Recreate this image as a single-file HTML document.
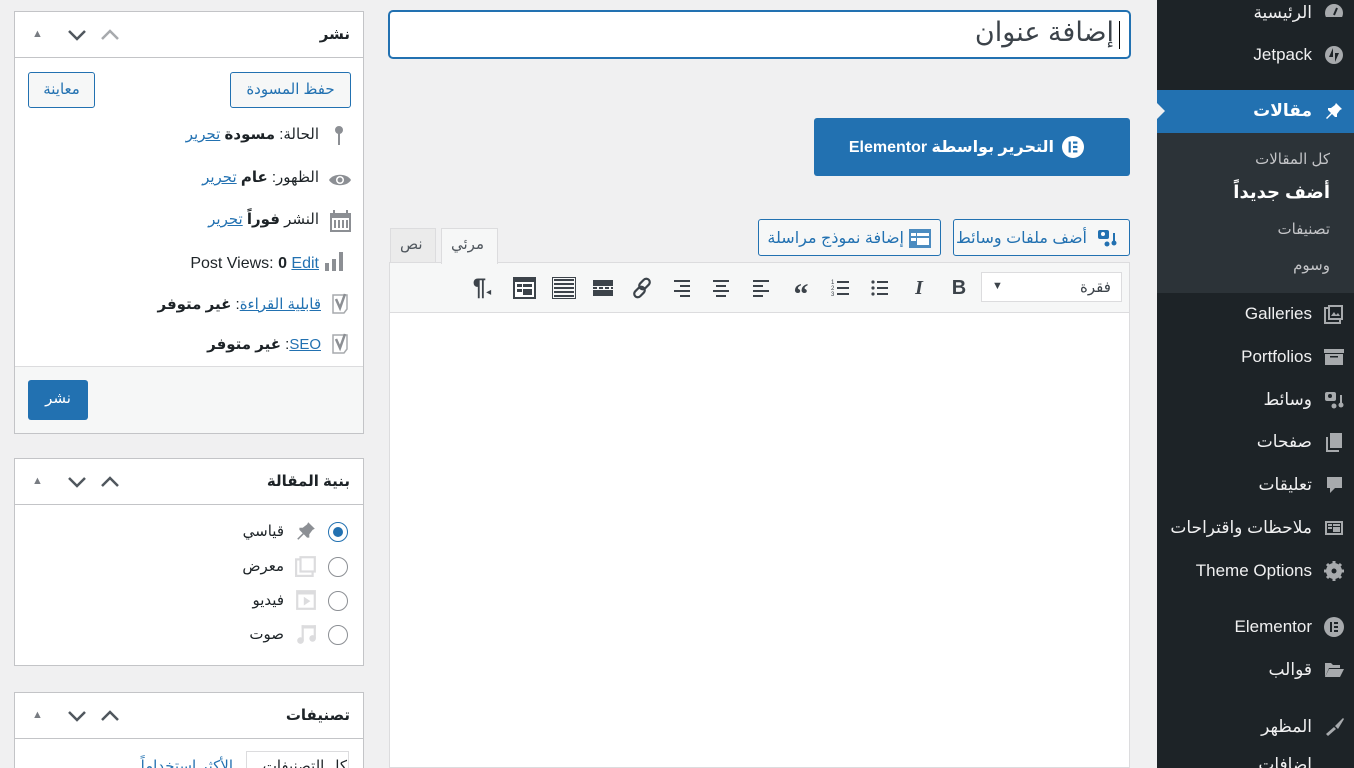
<!DOCTYPE html>
<html dir="ltr" style="height:768px;overflow:hidden"><head><meta charset="utf-8"><style>
*{box-sizing:border-box;margin:0;padding:0}
body{width:1354px;height:768px;overflow:hidden;background:#f0f0f1;font-family:"Liberation Sans","DejaVu Sans",sans-serif;color:#1d2327;position:relative;font-size:15px}
.a{position:absolute}
#side{left:1157px;top:0;width:197px;height:768px;background:#1d2327}
.mi{position:absolute;right:42px;color:#f0f0f1;font-size:17px;line-height:20px;white-space:nowrap;direction:rtl}
.ic{position:absolute;left:167px;width:20px;height:20px}
.sub{position:absolute;right:24px;color:#c3c4c7;font-size:15px;direction:rtl;line-height:20px}
.box{position:absolute;left:14px;width:350px;background:#fff;border:1px solid #c3c4c7}
.bh{height:46px;border-bottom:1px solid #c3c4c7;position:relative}
.bh .t{position:absolute;right:13px;top:13px;font-weight:bold;font-size:15px;direction:rtl}
.arr{position:absolute;top:14px;font-size:14px;color:#787c82}
.btn{position:absolute;border:1px solid #2271b1;color:#2271b1;border-radius:3px;background:#f6f7f7;font-size:15px;text-align:center;direction:rtl}
.row{position:absolute;right:14px;font-size:15px;direction:rtl;white-space:nowrap;line-height:20px}
.row a{color:#2271b1;text-decoration:underline}
.rad{position:absolute;left:313px;width:20px;height:20px;border:1px solid #8c8f94;border-radius:50%;background:#fff}
.tb{position:absolute;top:276px;width:24px;height:24px;color:#3c434a;font-size:20px;text-align:center;line-height:24px}
</style></head><body>

<div id="side" class="a">
 <div class="a" style="left:0;top:90px;width:197px;height:43px;background:#2271b1"></div>
 <div class="a" style="left:0;top:103px;width:0;height:0;border-top:8px solid transparent;border-bottom:8px solid transparent;border-left:8px solid #f0f0f1"></div>
 <div class="a" style="left:0;top:133px;width:197px;height:160px;background:#2c3338"></div>

 <svg class="ic" style="top:3px" viewBox="0 0 20 20"><circle cx="10" cy="10" r="9" fill="#a7aaad"/><rect x="0" y="14" width="20" height="6" fill="#1d2327"/><path d="M10 12 L13 5" stroke="#1d2327" stroke-width="2"/></svg>
 <div class="mi" style="top:3px">الرئيسية</div>
 <svg class="ic" style="top:45px" viewBox="0 0 20 20"><circle cx="10" cy="10" r="9" fill="#a7aaad"/><path d="M9 3v9H5z M11 17V8h4z" fill="#1d2327"/></svg>
 <div class="mi" style="top:45px">Jetpack</div>
 <svg class="ic" style="top:101px" viewBox="0 0 20 20"><path d="M12 2l6 6-2 1-3 4 0 3-2 0-3-3-5 5-1-1 5-5-3-3 0-2 3 0 4-3z" fill="#fff"/></svg>
 <div class="mi" style="top:101px;font-weight:bold;color:#fff">مقالات</div>
 <div class="sub" style="top:150px">كل المقالات</div>
 <div class="sub" style="top:182px;color:#fff;font-weight:bold;font-size:18px">أضف جديداً</div>
 <div class="sub" style="top:220px">تصنيفات</div>
 <div class="sub" style="top:256px">وسوم</div>

 <svg class="ic" style="top:304px" viewBox="0 0 20 20"><rect x="4" y="1" width="15" height="15" fill="#a7aaad"/><rect x="1" y="4" width="15" height="15" fill="none" stroke="#a7aaad" stroke-width="2"/><rect x="6" y="3" width="11" height="11" fill="#1d2327"/><path d="M7 12l3-4 2 3 2-2 2 3z" fill="#a7aaad"/></svg>
 <div class="mi" style="top:304px">Galleries</div>
 <svg class="ic" style="top:347px" viewBox="0 0 20 20"><rect x="0" y="2" width="20" height="4" fill="#a7aaad"/><rect x="1" y="7" width="18" height="11" fill="#a7aaad"/><rect x="6" y="9" width="8" height="1.5" fill="#1d2327"/></svg>
 <div class="mi" style="top:347px">Portfolios</div>
 <svg class="ic" style="top:390px" viewBox="0 0 20 20"><rect x="1" y="2" width="11" height="9" rx="2" fill="#a7aaad"/><circle cx="6" cy="6" r="2" fill="#1d2327"/><circle cx="10" cy="16" r="2.5" fill="#a7aaad"/><circle cx="17" cy="15" r="2.5" fill="#a7aaad"/><rect x="16" y="5" width="2" height="10" fill="#a7aaad"/></svg>
 <div class="mi" style="top:390px">وسائط</div>
 <svg class="ic" style="top:432px" viewBox="0 0 20 20"><rect x="6" y="1" width="12" height="15" fill="#a7aaad"/><path d="M3 5v14h12" fill="none" stroke="#a7aaad" stroke-width="2"/></svg>
 <div class="mi" style="top:432px">صفحات</div>
 <svg class="ic" style="top:475px" viewBox="0 0 20 20"><path d="M3 2h15v11h-7l-5 5v-5H3z" fill="#a7aaad"/></svg>
 <div class="mi" style="top:475px">تعليقات</div>
 <svg class="ic" style="top:518px" viewBox="0 0 20 20"><rect x="1" y="3" width="18" height="14" fill="#a7aaad"/><rect x="3" y="5" width="14" height="10" fill="#1d2327"/><rect x="4" y="6" width="4" height="2" fill="#a7aaad"/><rect x="9" y="6" width="7" height="2" fill="#a7aaad"/><rect x="4" y="9" width="4" height="2" fill="#a7aaad"/><rect x="9" y="9" width="7" height="5" fill="#a7aaad"/></svg>
 <div class="mi" style="top:518px">ملاحظات واقتراحات</div>
 <svg class="ic" style="top:561px" viewBox="0 0 20 20"><circle cx="10" cy="10" r="6" fill="none" stroke="#a7aaad" stroke-width="4"/><path d="M10 0v20M0 10h20M3 3l14 14M17 3L3 17" stroke="#a7aaad" stroke-width="3"/><circle cx="10" cy="10" r="2.5" fill="#1d2327"/></svg>
 <div class="mi" style="top:561px">Theme Options</div>
 <svg class="ic" style="top:617px" viewBox="0 0 20 20"><circle cx="10" cy="10" r="10" fill="#a7aaad"/><rect x="6" y="5" width="2" height="10" fill="#1d2327"/><rect x="10" y="5" width="4" height="2" fill="#1d2327"/><rect x="10" y="9" width="4" height="2" fill="#1d2327"/><rect x="10" y="13" width="4" height="2" fill="#1d2327"/></svg>
 <div class="mi" style="top:617px">Elementor</div>
 <svg class="ic" style="top:660px" viewBox="0 0 20 20"><path d="M1 3h6l2 2h7v3H5l-4 9z" fill="#a7aaad"/><path d="M5 9h15l-4 8H1z" fill="#a7aaad"/></svg>
 <div class="mi" style="top:660px">قوالب</div>
 <svg class="ic" style="top:717px" viewBox="0 0 20 20"><path d="M19 1l-8 8 3 3 6-10z" fill="#a7aaad"/><path d="M10 10l-8 7 2 2 8-7z" fill="#a7aaad"/></svg>
 <div class="mi" style="top:717px">المظهر</div>
 <div class="mi" style="top:755px">إضافات</div>
</div>

<div class="a" style="left:389px;top:11px;width:741px;height:47px;background:#fff;border:1px solid #2271b1;border-radius:4px;box-shadow:0 0 0 1px #2271b1"></div>
<div class="a" style="right:240px;top:17px;font-size:27px;direction:rtl;color:#3c434a">إضافة عنوان</div>
<div class="a" style="left:1119px;top:21px;width:1px;height:28px;background:#000"></div>

<div class="a" style="left:814px;top:118px;width:316px;height:58px;background:#2271b1;border-radius:3px"></div>
<div class="a" style="right:300px;top:137px;color:#fff;font-size:16px;direction:rtl;font-weight:bold;white-space:nowrap">التحرير بواسطة Elementor</div>
<svg class="a" style="left:1062px;top:136px" width="22" height="22" viewBox="0 0 20 20"><circle cx="10" cy="10" r="10" fill="#fff"/><rect x="6" y="5" width="2" height="10" fill="#2271b1"/><rect x="10" y="5" width="4" height="2" fill="#2271b1"/><rect x="10" y="9" width="4" height="2" fill="#2271b1"/><rect x="10" y="13" width="4" height="2" fill="#2271b1"/></svg>

<div class="btn" style="left:953px;top:219px;width:177px;height:37px"></div>
<div class="a" style="right:267px;top:228px;color:#2271b1;direction:rtl;font-size:16px;white-space:nowrap">أضف ملفات وسائط</div>
<svg class="a" style="left:1096px;top:228px" width="22" height="20" viewBox="0 0 20 20"><rect x="1" y="2" width="11" height="9" rx="2" fill="#2271b1"/><circle cx="6" cy="6" r="2" fill="#fff"/><circle cx="10" cy="16" r="2.5" fill="#2271b1"/><circle cx="17" cy="15" r="2.5" fill="#2271b1"/><rect x="16" y="5" width="2" height="10" fill="#2271b1"/></svg>
<div class="btn" style="left:758px;top:219px;width:183px;height:37px"></div>
<div class="a" style="right:450px;top:228px;color:#2271b1;direction:rtl;font-size:16px;white-space:nowrap">إضافة نموذج مراسلة</div>
<svg class="a" style="left:909px;top:229px" width="22" height="19" viewBox="0 0 22 19"><rect width="22" height="19" fill="#2271b1" opacity=".8"/><rect x="2" y="4" width="5" height="3" fill="#fff"/><rect x="8" y="4" width="12" height="3" fill="#fff"/><rect x="2" y="9" width="5" height="3" fill="#fff"/><rect x="8" y="9" width="12" height="7" fill="#fff"/></svg>

<div class="a" style="left:390px;top:228px;width:46px;height:34px;background:#ebebeb;border:1px solid #dcdcde;border-bottom:none"></div>
<div class="a" style="left:400px;top:235px;font-size:15px;color:#50575e">نص</div>
<div class="a" style="left:441px;top:228px;width:57px;height:36px;background:#f6f7f7;border:1px solid #dcdcde;border-bottom:none;z-index:2"></div>
<div class="a" style="left:451px;top:235px;font-size:15px;color:#50575e;z-index:3">مرئي</div>

<div class="a" style="left:389px;top:262px;width:741px;height:506px;background:#fff;border:1px solid #dcdcde"></div>
<div class="a" style="left:390px;top:263px;width:739px;height:50px;background:#f6f7f7;border-bottom:1px solid #dcdcde"></div>
<div class="a" style="left:981px;top:272px;width:141px;height:30px;background:#fff;border:1px solid #dcdcde"></div>
<div class="a" style="left:992px;top:280px;font-size:11px;color:#3c434a">▼</div>
<div class="a" style="left:1080px;top:278px;font-size:15px;color:#3c434a">فقرة</div>
<div class="tb" style="left:947px;font-weight:bold">B</div>
<div class="tb" style="left:907px;font-style:italic;font-family:'Liberation Serif',serif;font-weight:bold">I</div>
<svg class="a" style="left:870px;top:278px" width="20" height="20" viewBox="0 0 20 20" fill="#3c434a"><circle cx="3" cy="4" r="1.6"/><circle cx="3" cy="10" r="1.6"/><circle cx="3" cy="16" r="1.6"/><rect x="7" y="3" width="11" height="2"/><rect x="7" y="9" width="11" height="2"/><rect x="7" y="15" width="11" height="2"/></svg>
<svg class="a" style="left:831px;top:278px" width="20" height="20" viewBox="0 0 20 20" fill="#3c434a"><text x="0" y="6" font-size="6">1</text><text x="0" y="12" font-size="6">2</text><text x="0" y="18" font-size="6">3</text><rect x="6" y="3" width="12" height="2"/><rect x="6" y="9" width="12" height="2"/><rect x="6" y="15" width="12" height="2"/></svg>
<div class="tb" style="left:789px;font-weight:bold;font-size:30px;line-height:38px;font-family:'Liberation Serif',serif">“</div>
<svg class="a" style="left:751px;top:278px" width="20" height="20" viewBox="0 0 20 20" fill="#3c434a"><rect x="2" y="2" width="16" height="2"/><rect x="2" y="7" width="10" height="2"/><rect x="2" y="12" width="16" height="2"/><rect x="2" y="17" width="10" height="2"/></svg>
<svg class="a" style="left:711px;top:278px" width="20" height="20" viewBox="0 0 20 20" fill="#3c434a"><rect x="2" y="2" width="16" height="2"/><rect x="5" y="7" width="10" height="2"/><rect x="2" y="12" width="16" height="2"/><rect x="5" y="17" width="10" height="2"/></svg>
<svg class="a" style="left:672px;top:278px" width="20" height="20" viewBox="0 0 20 20" fill="#3c434a"><rect x="2" y="2" width="16" height="2"/><rect x="8" y="7" width="10" height="2"/><rect x="2" y="12" width="16" height="2"/><rect x="8" y="17" width="10" height="2"/></svg>
<svg class="a" style="left:632px;top:277px" width="22" height="22" viewBox="0 0 22 22" fill="none" stroke="#3c434a" stroke-width="2.2"><rect x="9" y="1" width="7" height="12" rx="3.5" transform="rotate(45 12.5 7)"/><rect x="4" y="9" width="7" height="12" rx="3.5" transform="rotate(45 7.5 15)"/></svg>
<svg class="a" style="left:592px;top:278px" width="22" height="20" viewBox="0 0 22 20" fill="#3c434a"><rect x="1" y="2" width="20" height="6"/><rect x="1" y="12" width="20" height="6"/><rect x="1" y="9" width="4" height="2"/><rect x="7" y="9" width="4" height="2"/><rect x="13" y="9" width="4" height="2"/><rect x="19" y="9" width="2" height="2"/></svg>
<svg class="a" style="left:552px;top:277px" width="24" height="22" viewBox="0 0 24 22"><rect x="0.5" y="0.5" width="23" height="21" fill="none" stroke="#3c434a"/><g fill="#3c434a"><rect x="2" y="2" width="20" height="2"/><rect x="2" y="6" width="20" height="2"/><rect x="2" y="10" width="20" height="2"/><rect x="2" y="14" width="20" height="2"/><rect x="2" y="18" width="20" height="2"/></g></svg>
<svg class="a" style="left:513px;top:277px" width="23" height="22" viewBox="0 0 23 22"><rect width="23" height="22" fill="#3c434a"/><rect x="2" y="5" width="19" height="15" fill="#fff"/><rect x="4" y="7" width="5" height="3" fill="#3c434a"/><rect x="10" y="7" width="9" height="3" fill="#3c434a"/><rect x="4" y="12" width="5" height="3" fill="#3c434a"/><rect x="10" y="12" width="9" height="6" fill="#3c434a"/></svg>
<div class="tb" style="left:470px;font-size:24px;font-weight:bold">¶<span style="font-size:10px">◂</span></div>

<div class="box" style="top:11px;height:423px">
 <div class="bh"><div class="t">نشر</div>
  <div class="arr" style="left:17px;font-size:11px;top:16px">▲</div>
  <svg class="a" style="left:52px;top:17px" width="20" height="12" viewBox="0 0 20 12"><path d="M2 2l8 8 8-8" fill="none" stroke="#50575e" stroke-width="2.5"/></svg>
  <svg class="a" style="left:85px;top:17px" width="20" height="12" viewBox="0 0 20 12"><path d="M2 10l8-8 8 8" fill="none" stroke="#a7aaad" stroke-width="2.5"/></svg>
 </div>
 <div class="btn" style="left:215px;top:60px;width:121px;height:36px;line-height:34px">حفظ المسودة</div>
 <div class="btn" style="left:13px;top:60px;width:67px;height:36px;line-height:34px">معاينة</div>
 <svg class="a" style="left:318px;top:113px" width="12" height="22" viewBox="0 0 12 22"><circle cx="6" cy="5" r="4" fill="#8c8f94"/><rect x="5" y="8" width="2" height="12" fill="#8c8f94"/></svg>
 <div class="row" style="top:113px;right:44px">الحالة: <b>مسودة</b> <a>تحرير</a></div>
 <svg class="a" style="left:313px;top:160px" width="24" height="16" viewBox="0 0 24 16"><path d="M1 8C5 1 19 1 23 8 19 15 5 15 1 8z" fill="#8c8f94"/><circle cx="12" cy="8" r="4" fill="#fff"/><circle cx="12" cy="8" r="2.5" fill="#8c8f94"/></svg>
 <div class="row" style="top:156px;right:44px">الظهور: <b>عام</b> <a>تحرير</a></div>
 <svg class="a" style="left:315px;top:198px" width="21" height="22" viewBox="0 0 21 22" fill="#8c8f94"><rect x="0" y="3" width="21" height="19"/><rect x="2" y="8" width="17" height="12" fill="#fff"/><rect x="4" y="10" width="2" height="8"/><rect x="8" y="10" width="2" height="8"/><rect x="12" y="10" width="2" height="8"/><rect x="16" y="10" width="2" height="8"/><rect x="3" y="0" width="2" height="5"/><rect x="16" y="0" width="2" height="5"/></svg>
 <div class="row" style="top:198px;right:44px">النشر <b>فوراً</b> <a>تحرير</a></div>
 <svg class="a" style="left:310px;top:239px" width="20" height="22" viewBox="0 0 20 22" fill="#8c8f94"><rect x="0" y="12" width="4" height="8"/><rect x="7" y="8" width="4" height="12"/><rect x="14" y="1" width="4" height="19"/></svg>
 <div class="row" style="top:242px;right:44px;direction:ltr;font-size:16px">Post Views: <b>0</b> <a>Edit</a></div>
 <svg class="a" style="left:314px;top:280px" width="22" height="24" viewBox="0 0 22 24"><path d="M4 3h14v14l-3 4H4z" fill="none" stroke="#a7aaad" stroke-width="1.5"/><path d="M7 7l4 9 5-14" fill="none" stroke="#8c8f94" stroke-width="2.5"/></svg>
 <div class="row" style="top:283px;right:42px"><a>قابلية القراءة</a>: <b>غير متوفر</b></div>
 <svg class="a" style="left:314px;top:320px" width="22" height="24" viewBox="0 0 22 24"><path d="M4 3h14v14l-3 4H4z" fill="none" stroke="#a7aaad" stroke-width="1.5"/><path d="M7 7l4 9 5-14" fill="none" stroke="#8c8f94" stroke-width="2.5"/></svg>
 <div class="row" style="top:323px;right:42px"><a>SEO</a>: <b>غير متوفر</b></div>
 <div class="a" style="left:0;top:354px;width:348px;height:67px;background:#f6f7f7;border-top:1px solid #dcdcde"></div>
 <div class="a" style="left:13px;top:368px;width:60px;height:40px;background:#2271b1;border-radius:3px;color:#fff;text-align:center;line-height:38px;font-size:15px">نشر</div>
</div>

<div class="box" style="top:458px;height:208px">
 <div class="bh"><div class="t">بنية المقالة</div>
  <div class="arr" style="left:17px;font-size:11px;top:16px">▲</div>
  <svg class="a" style="left:52px;top:17px" width="20" height="12" viewBox="0 0 20 12"><path d="M2 2l8 8 8-8" fill="none" stroke="#50575e" stroke-width="2.5"/></svg>
  <svg class="a" style="left:85px;top:17px" width="20" height="12" viewBox="0 0 20 12"><path d="M2 10l8-8 8 8" fill="none" stroke="#50575e" stroke-width="2.5"/></svg>
 </div>
 <div class="rad" style="top:63px;border-color:#2271b1"><div style="margin:4px;width:10px;height:10px;border-radius:50%;background:#2271b1"></div></div>
 <div class="rad" style="top:98px"></div>
 <div class="rad" style="top:132px"></div>
 <div class="rad" style="top:166px"></div>
 <svg class="a" style="left:280px;top:61px" width="22" height="22" viewBox="0 0 20 20"><path d="M12 2l6 6-2 1-3 4 0 3-2 0-3-3-5 5-1-1 5-5-3-3 0-2 3 0 4-3z" fill="#8c8f94"/></svg>
 <svg class="a" style="left:280px;top:96px" width="22" height="22" viewBox="0 0 20 20"><rect x="4" y="1" width="15" height="15" fill="#dcdcde"/><rect x="1" y="4" width="15" height="15" fill="none" stroke="#dcdcde" stroke-width="2"/><rect x="6" y="3" width="11" height="11" fill="#fff"/></svg>
 <svg class="a" style="left:280px;top:130px" width="22" height="22" viewBox="0 0 20 20"><rect x="1" y="1" width="18" height="18" fill="#dcdcde"/><rect x="3" y="5" width="14" height="12" fill="#fff"/><path d="M8 7v8l6-4z" fill="#dcdcde"/></svg>
 <svg class="a" style="left:280px;top:164px" width="22" height="22" viewBox="0 0 20 20" fill="#dcdcde"><rect x="6" y="2" width="13" height="3"/><rect x="6" y="2" width="2" height="14"/><rect x="17" y="2" width="2" height="12"/><circle cx="5" cy="16" r="3"/><circle cx="16" cy="14" r="3"/></svg>
 <div class="row" style="top:63px;right:79px">قياسي</div>
 <div class="row" style="top:98px;right:79px">معرض</div>
 <div class="row" style="top:132px;right:79px">فيديو</div>
 <div class="row" style="top:166px;right:79px">صوت</div>
</div>

<div class="box" style="top:692px;height:90px">
 <div class="bh"><div class="t">تصنيفات</div>
  <div class="arr" style="left:17px;font-size:11px;top:16px">▲</div>
  <svg class="a" style="left:52px;top:17px" width="20" height="12" viewBox="0 0 20 12"><path d="M2 2l8 8 8-8" fill="none" stroke="#50575e" stroke-width="2.5"/></svg>
  <svg class="a" style="left:85px;top:17px" width="20" height="12" viewBox="0 0 20 12"><path d="M2 10l8-8 8 8" fill="none" stroke="#50575e" stroke-width="2.5"/></svg>
 </div>
 <div class="a" style="left:231px;top:58px;width:103px;height:34px;border:1px solid #dcdcde;border-bottom:none;background:#fff"></div>
 <div class="row" style="top:64px;right:16px">كل التصنيفات</div>
 <div class="row" style="top:64px;right:130px;color:#2271b1">الأكثر استخداماً</div>
</div>
</body></html>
